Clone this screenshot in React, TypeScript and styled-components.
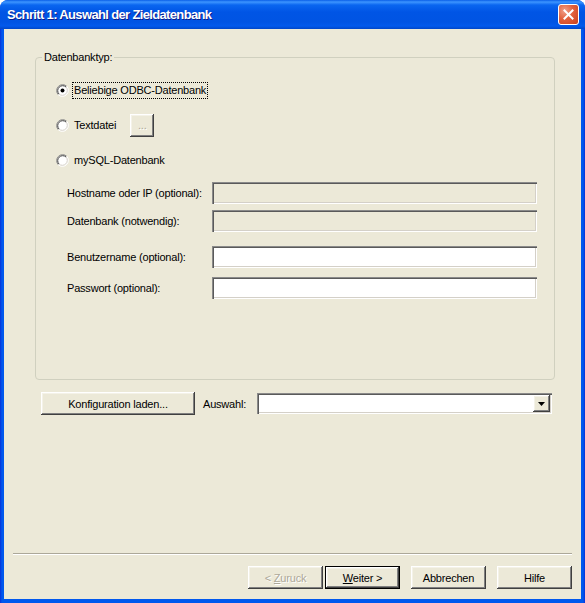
import styled, { createGlobalStyle } from "styled-components";

const GlobalStyle = createGlobalStyle`
  html, body {
    margin: 0;
    padding: 0;
    background: #fff;
  }
  body {
    font-family: "Liberation Sans", Arial, sans-serif;
    font-size: 11px;
    letter-spacing: -0.2px;
    color: #000;
  }
`;

const sunken = `
  box-shadow: inset 1px 1px #8a8a8a, inset 2px 2px #5a5a5a,
    inset -1px -1px #fff, inset -2px -2px #d4d0c8;
`;

const raised = `
  box-shadow: inset -1px -1px #404040, inset 1px 1px #fff,
    inset -2px -2px #808080, inset 2px 2px #f4f2e8;
`;

const Window = styled.div`
  width: 585px;
  height: 603px;
  display: flex;
  flex-direction: column;
  background: linear-gradient(to right, #0831d9 0, #0058ee 2px, #0058ee 583px, #0831d9 585px);
  border-radius: 8px 8px 0 0;
  overflow: hidden;
`;

const TitleBar = styled.div`
  height: 29px;
  flex-shrink: 0;
  display: flex;
  align-items: center;
  justify-content: space-between;
  padding: 0 6px 0 7px;
  background: linear-gradient(
    #0a5fe8 0,
    #3d95ff 2px,
    #0a66f0 5px,
    #0055e5 12px,
    #0054e3 22px,
    #025aec 26px,
    #0046c8 29px
  );
  color: #fff;
  font-family: "Liberation Sans", Arial, sans-serif;
  font-weight: bold;
  font-size: 13px;
  letter-spacing: -0.65px;
  text-shadow: 1px 1px #0f1c89;
`;

const CloseButton = styled.div`
  width: 21px;
  height: 21px;
  box-sizing: border-box;
  border: 1px solid #fff;
  border-radius: 3px;
  background: radial-gradient(circle at 30% 30%, #f0a08a 0, #e2613d 45%, #c8401d 100%);
  display: flex;
  align-items: center;
  justify-content: center;
`;

const Client = styled.div`
  flex: 1;
  min-height: 0;
  margin: 0 4px 4px;
  background: #ece9d8;
  display: flex;
  flex-direction: column;
  padding: 22px 0 10px;
  box-sizing: border-box;
`;

const GroupBox = styled.fieldset`
  margin: 0 0 0 31px;
  width: 520px;
  height: 329px;
  box-sizing: border-box;
  border: 1px solid #d0d0bf;
  border-radius: 4px;
  padding: 0;
  min-width: 0;
`;

const Legend = styled.legend`
  margin-left: 6px;
  padding: 0 2px;
  line-height: 13px;
  font-size: 11px;
`;

const GroupBody = styled.div`
  display: flex;
  flex-direction: column;
  padding: 14px 0 0 20px;
`;

const RadioList = styled.div`
  display: flex;
  flex-direction: column;
  gap: 11px;
`;

const RadioRow = styled.label`
  display: flex;
  align-items: center;
  height: 24px;
`;

const RadioText = styled.span<{ $focused?: boolean }>`
  margin-left: 3px;
  padding: 1px;
  line-height: 13px;
  border: 1px dotted ${(p) => (p.$focused ? "#000" : "transparent")};
`;

const Button = styled.button<{ $width: number; $default?: boolean }>`
  width: ${(p) => p.$width}px;
  height: 23px;
  box-sizing: border-box;
  padding: 0;
  margin: 0;
  font-family: "Liberation Sans", Arial, sans-serif;
  font-size: 11px;
  letter-spacing: -0.2px;
  color: #000;
  background: #ece9d8;
  border: ${(p) => (p.$default ? "1px solid #000" : "none")};
  ${raised}
  &:disabled {
    color: #aca899;
    text-shadow: 1px 1px #fff;
  }
`;

const BrowseButton = styled(Button)`
  margin-left: 12px;
`;

const Fields = styled.div`
  display: flex;
  flex-direction: column;
  margin: 10px 0 0 11px;
`;

const FieldRow = styled.div<{ $top: number }>`
  display: flex;
  align-items: center;
  margin-top: ${(p) => p.$top}px;
`;

const FieldLabel = styled.span`
  width: 145px;
`;

const TextInput = styled.input`
  width: 325px;
  height: 22px;
  box-sizing: border-box;
  border: none;
  outline: none;
  padding: 2px 4px;
  font-family: "Liberation Sans", Arial, sans-serif;
  font-size: 11px;
  background: #fff;
  ${sunken}
  &:disabled {
    background: #ece9d8;
  }
`;

const BottomRow = styled.div`
  display: flex;
  align-items: center;
  margin: 12px 0 0 37px;
`;

const ComboLabel = styled.span`
  width: 54px;
  margin-left: 8px;
`;

const Combo = styled.div`
  width: 295px;
  height: 21px;
  box-sizing: border-box;
  padding: 2px;
  background: #fff;
  display: flex;
  justify-content: flex-end;
  ${sunken}
`;

const DropButton = styled.div`
  width: 17px;
  height: 17px;
  background: #ece9d8;
  display: flex;
  align-items: center;
  justify-content: center;
  ${raised}
`;

const Separator = styled.div`
  margin: auto 9px 0;
  border-top: 1px solid #aca899;
  border-bottom: 1px solid #fff;
`;

const ButtonBar = styled.div`
  display: flex;
  justify-content: flex-end;
  gap: 11px;
  margin: 11px 9px 0 0;
`;

const WizardNav = styled.div`
  display: flex;
  gap: 2px;
`;

const Radio = ({ checked }: { checked?: boolean }) => (
  <svg width="13" height="13" viewBox="0 0 13 13">
    <circle cx="6.5" cy="6.5" r="5.5" fill="#fff" />
    <path d="M2.26 10.74 A6 6 0 0 1 10.74 2.26" fill="none" stroke="#8a8a8a" />
    <path d="M10.74 2.26 A6 6 0 0 1 2.26 10.74" fill="none" stroke="#fff" />
    <path d="M2.97 10.03 A5 5 0 0 1 10.03 2.97" fill="none" stroke="#404040" />
    <path d="M10.03 2.97 A5 5 0 0 1 2.97 10.03" fill="none" stroke="#d4d0c8" />
    {checked && <circle cx="6.5" cy="6.5" r="2" fill="#000" />}
  </svg>
);

export default function App() {
  return (
    <>
      <GlobalStyle />
      <Window>
        <TitleBar>
          <span>Schritt 1: Auswahl der Zieldatenbank</span>
          <CloseButton>
            <svg width="11" height="11" viewBox="0 0 11 11">
              <path d="M1.5 1.5 L9.5 9.5 M9.5 1.5 L1.5 9.5" stroke="#fff" strokeWidth="2" strokeLinecap="square" />
            </svg>
          </CloseButton>
        </TitleBar>
        <Client>
          <GroupBox>
            <Legend>Datenbanktyp:</Legend>
            <GroupBody>
              <RadioList>
                <RadioRow>
                  <Radio checked />
                  <RadioText $focused>Beliebige ODBC-Datenbank</RadioText>
                </RadioRow>
                <RadioRow>
                  <Radio />
                  <RadioText>Textdatei</RadioText>
                  <BrowseButton $width={24} disabled>
                    ...
                  </BrowseButton>
                </RadioRow>
                <RadioRow>
                  <Radio />
                  <RadioText>mySQL-Datenbank</RadioText>
                </RadioRow>
              </RadioList>
              <Fields>
                <FieldRow $top={0}>
                  <FieldLabel>Hostname oder IP (optional):</FieldLabel>
                  <TextInput disabled />
                </FieldRow>
                <FieldRow $top={6}>
                  <FieldLabel>Datenbank (notwendig):</FieldLabel>
                  <TextInput disabled />
                </FieldRow>
                <FieldRow $top={14}>
                  <FieldLabel>Benutzername (optional):</FieldLabel>
                  <TextInput />
                </FieldRow>
                <FieldRow $top={9}>
                  <FieldLabel>Passwort (optional):</FieldLabel>
                  <TextInput type="password" />
                </FieldRow>
              </Fields>
            </GroupBody>
          </GroupBox>
          <BottomRow>
            <Button $width={154}>Konfiguration laden...</Button>
            <ComboLabel>Auswahl:</ComboLabel>
            <Combo>
              <DropButton>
                <svg width="7" height="4" viewBox="0 0 7 4">
                  <path d="M0 0 H7 L3.5 4 Z" fill="#000" />
                </svg>
              </DropButton>
            </Combo>
          </BottomRow>
          <Separator />
          <ButtonBar>
            <WizardNav>
              <Button $width={75} disabled>
                &lt; <u>Z</u>uruck
              </Button>
              <Button $width={75} $default>
                <u>W</u>eiter &gt;
              </Button>
            </WizardNav>
            <Button $width={75}>Abbrechen</Button>
            <Button $width={75}>Hilfe</Button>
          </ButtonBar>
        </Client>
      </Window>
    </>
  );
}
